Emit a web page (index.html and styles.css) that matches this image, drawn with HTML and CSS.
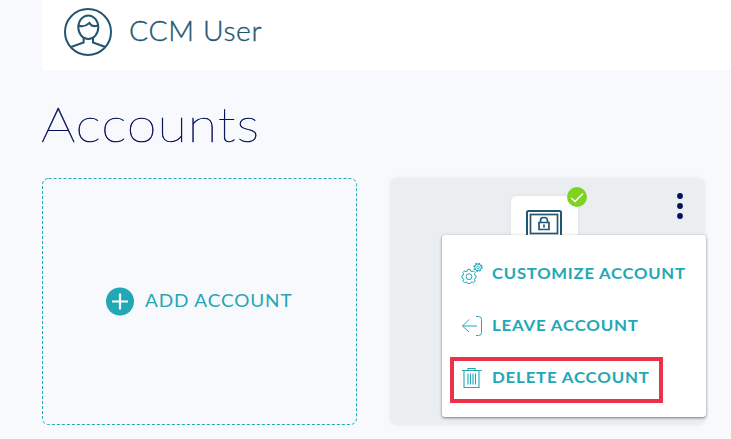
FILE: index.html
```html
<!DOCTYPE html>
<html lang="en">
<head>
<meta charset="utf-8">
<title>Accounts</title>
<link rel="stylesheet" href="styles.css">
</head>
<body>
<main class="page">
  <header class="user-bar">
    <svg class="avatar" viewBox="0 0 48 48"><g fill="none" stroke="#245671" stroke-width="2"><circle cx="24" cy="24" r="23"/><ellipse cx="24.3" cy="19.3" rx="10" ry="11.8"/><path d="M14.5 17.5C18 19 22 18 25.500 15C27 18 30 18.800 34 17.500M19.600 30V34.500L7 39M29 30V34.500L41.500 39"/></g></svg>
    <span class="user-name">CCM User</span>
  </header>
  <h1 class="heading"><span>Accounts</span></h1>
  <section class="cards">
    <button class="add-card">
      <svg class="frame" viewBox="0 0 315 247"><rect x=".5" y=".5" width="314" height="246" rx="6"/></svg>
      <svg class="plus" viewBox="0 0 28 28"><circle cx="14" cy="14" r="14" fill="#22a8b5"/><path d="M6 14H22M14 6V22" stroke="#fff" stroke-width="2.200"/></svg>
      <span class="add-label">ADD ACCOUNT</span>
    </button>
    <article class="account-card">
      <div class="tile">
        <svg viewBox="0 0 36 34" class="safe"><g fill="none" stroke="#245671"><rect x="1" y="1" width="34" height="29" rx="1.500" stroke-width="2"/><rect x="4.500" y="4.500" width="27" height="19" stroke-width="1.700"/><path d="M13 12.500H23V19.500H13ZM14.500 12.500V10.500Q14.500 7.500 18 7.500T21.500 10.500V12.500M18 14.500V17.500" stroke-width="1.700"/></g></svg>
        <svg class="check" viewBox="0 0 20 20"><circle cx="10" cy="10" r="10" fill="#7ed321"/><path d="M4.300 11L8 14.500L16 6.500" fill="none" stroke="#fff" stroke-width="1.500"/></svg>
      </div>
      <svg class="dots" viewBox="0 0 6 26"><g fill="#04105a"><circle cx="3" cy="3" r="2.900"/><circle cx="3" cy="13" r="2.900"/><circle cx="3" cy="23" r="2.900"/></g></svg>
      <nav class="menu">
        <a class="item"><svg viewBox="0 0 22 22"><g fill="none" stroke="#22a8b5"><path stroke-linejoin="round" d="M6.700 7.500H9.300L9.800 9.200L11 9.700L12.500 8.900L14.200 10.600L13.400 12.100L13.900 13.300L15 13.700V16L13.900 16.400L13.400 17.600L14.200 19L12.500 20.700L11 19.900L9.800 20.400L9.300 21.500H6.700L6.200 20.400L5 19.900L3.500 20.700L1.800 19L2.600 17.600L2.100 16.400L1 16V13.700L2.100 13.300L2.600 12.100L1.800 10.600L3.500 8.900L5 9.700L6.200 9.200Z"/><circle cx="8" cy="14.700" r="2.900"/><circle cx="17" cy="5.300" r="3.300"/><circle cx="17" cy="5.300" r="4" stroke-width="1.200" stroke-dasharray="1.700 1.440"/><circle cx="17" cy="5.300" r="1.400" stroke-width=".8"/></g></svg><span class="customize">CUSTOMIZE ACCOUNT</span></a>
        <a class="item"><svg viewBox="0 0 22 22"><path d="M16 11H1.500M8 4.500L1.500 11L8 17M15 1.500H17.500Q20.500 1.500 20.500 4.500V17.500Q20.500 20.500 17.500 20.500H15" fill="none" stroke="#22a8b5" stroke-width="1"/></svg><span class="leave">LEAVE ACCOUNT</span></a>
        <a class="item danger"><svg viewBox="0 0 22 22"><path d="M1 3.500H20.500M7 3V1.500H14V3M3 4V20.500H18V4M7 6.500V17.500M9.500 6.500V17.500M12 6.500V17.500M14.500 6.500V17.500" fill="none" stroke="#22a8b5" stroke-width="1.100"/></svg><span class="delete">DELETE ACCOUNT</span></a>
      </nav>
    </article>
  </section>
</main>
</body>
</html>
```

FILE: styles.css
```css
* { box-sizing: border-box; }
body { margin: 0; background: #f8f9fd; overflow: hidden; font-family: Lato, "Open Sans", sans-serif; color: #22a8b5; }
.page { height: 439px; padding-left: 42px; }
.user-bar { height: 70px; background: #fff; border-radius: 0 0 0 4px; display: flex; padding: 8px 0 0 22px; }
.avatar { width: 48px; height: 48px; margin-right: 17px; }
.user-name { font-size: 27px; font-weight: 300; line-height: 45px; color: #245671; letter-spacing: .6px; -webkit-text-stroke: .35px #245671; transform: scaleX(1.05); transform-origin: left; }
.heading { margin: 0; height: 108px; padding-top: 24px; font-weight: 100; font-size: 47px; line-height: 60px; color: #04105a; }
.heading span { display: inline-block; letter-spacing: .8px; -webkit-text-stroke: .5px #04105a; transform: translateX(-1px) scaleX(1.15); transform-origin: left; }
.cards { display: flex; gap: 33px; }
.add-card { position: relative; width: 315px; height: 247px; padding: 0 0 1px 64px; border: 0; background: none; display: flex; align-items: center; color: inherit; font: inherit; }
.frame { position: absolute; inset: 0; fill: none; stroke: #22a8b5; stroke-dasharray: 3 2; }
.plus { width: 28px; height: 29px; margin-right: 11px; }
.add-label { font-size: 18px; line-height: 22px; padding-bottom: 2px; letter-spacing: .8px; transform: scaleX(1.055); transform-origin: left; white-space: nowrap; }
.account-card { position: relative; width: 315px; height: 247px; border-radius: 7px; background: #eaeef1; box-shadow: 0 0 4px rgba(80,90,120,.08); padding: 18px 22px 0 121px; display: flex; justify-content: space-between; align-items: flex-start; }
.tile { position: relative; width: 67px; height: 70px; border-radius: 6px; background: #fff; padding: 14px 15px; box-shadow: 0 0 4px rgba(80,90,120,.08); }
.safe { display: block; width: 36px; height: 34px; }
.check { position: absolute; width: 20px; height: 20px; right: -9px; top: -9px; }
.dots { width: 6px; height: 26px; margin-top: -3px; }
.menu { position: absolute; left: 52px; top: 57px; width: 264px; height: 182px; background: #fff; border-radius: 3px; padding: 13px 8px; box-shadow: 0 1px 3px rgba(0,0,0,.5); }
.item { height: 52px; display: flex; align-items: center; padding-left: 11px; font-size: 15.5px; font-weight: 700; letter-spacing: .7px; white-space: nowrap; }
.item svg { width: 22px; height: 22px; margin-right: 9px; }
.item:first-child svg { margin-top: -2px; }
.item span { padding-bottom: 2px; transform: scaleX(1.075); transform-origin: left; }
.item .leave, .item .delete { transform: scaleX(1.09); }
.danger { width: 213px; height: 46px; margin-top: 5px; border: 4px solid #eb324b; padding: 0 0 4px 7px; }
```
